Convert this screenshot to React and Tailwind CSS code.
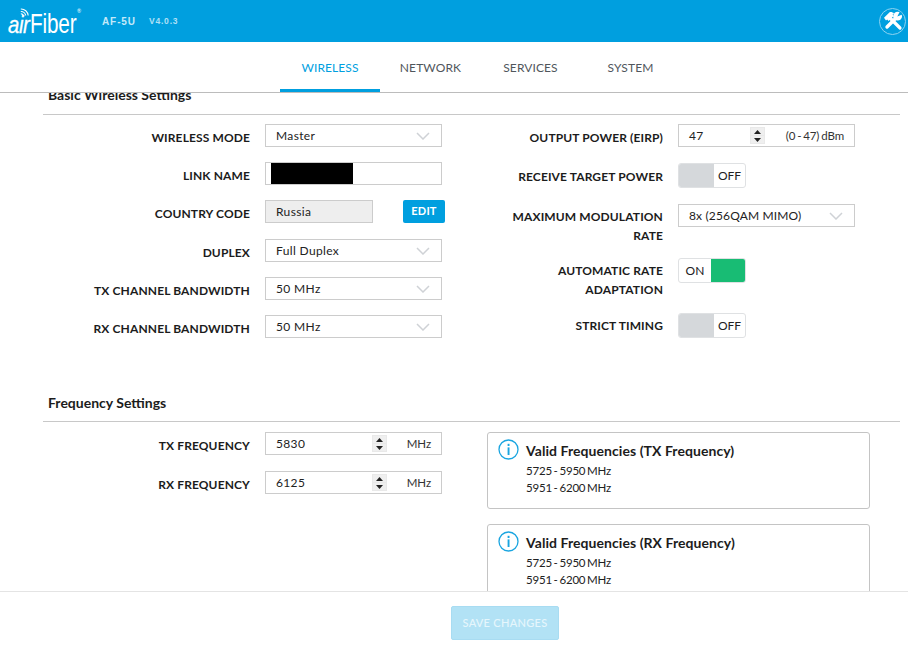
import React from "react";

function Chevron() {
  return (
    <svg width="14" height="8" viewBox="0 0 14 8" className="shrink-0">
      <path d="M1 1l6 6 6-6" fill="none" stroke="#cfd2d6" strokeWidth="1.5" />
    </svg>
  );
}

function Select({ value, tight }) {
  return (
    <div className={`w-[177px] h-[23px] border border-[#cccccc] bg-white flex items-center justify-between pl-[10px] pr-[11px] text-[12px] text-[#222] ${tight ? "tracking-[0.15px]" : "tracking-[0.35px]"}`}>
      <span>{value}</span>
      <Chevron />
    </div>
  );
}

function Spinner() {
  return (
    <div className="w-[15px] h-[17px] bg-[#e9e9e9] flex flex-col items-center justify-between py-[1px]">
      <div className="w-[13px] h-[7px] bg-[#efefef] flex items-center justify-center">
        <svg width="7" height="4" viewBox="0 0 7 4"><path d="M3.5 0L7 4H0z" fill="#222" /></svg>
      </div>
      <div className="w-[13px] h-[7px] bg-[#efefef] flex items-center justify-center">
        <svg width="7" height="4" viewBox="0 0 7 4"><path d="M3.5 4L7 0H0z" fill="#222" /></svg>
      </div>
    </div>
  );
}

function NumberInput({ value, unit, spinnerGap }) {
  return (
    <div className="w-[177px] h-[23px] border border-[#cccccc] bg-white flex items-center pl-[10px] pr-[10px] text-[12px] tracking-[0.35px] text-[#222]">
      <span className={spinnerGap}>{value}</span>
      <Spinner />
      <span className="ml-auto whitespace-nowrap text-[#333] text-[11.5px] tracking-[-0.1px] [word-spacing:-1px]">{unit}</span>
    </div>
  );
}

function Label({ children, className = "" }) {
  return (
    <div className={`text-right font-bold text-[12px] leading-[19px] tracking-[0.12px] text-[#1c1c1c] uppercase ${className}`}>
      {children}
    </div>
  );
}

function LeftRow({ label, children, className = "" }) {
  return (
    <div className={`flex items-center h-[23px] ${className}`}>
      <Label className="w-[207px] mr-[15px] pt-[3px]">{label}</Label>
      {children}
    </div>
  );
}

function Toggle({ on }) {
  return (
    <div className="w-[68px] h-[25px] rounded-[3px] border border-[#dfe1e3] flex overflow-hidden text-[12px] text-[#222] bg-white">
      {on ? (
        <>
          <div className="w-[32px] flex items-center justify-center">ON</div>
          <div className="flex-1 bg-[#18bc74]" />
        </>
      ) : (
        <>
          <div className="w-[35px] bg-[#d5d8db]" />
          <div className="flex-1 flex items-center justify-center">OFF</div>
        </>
      )}
    </div>
  );
}

function RightRow({ label, children, className = "", align = "items-center", labelPad = "" }) {
  return (
    <div className={`flex ${align} ${className}`}>
      <div className="w-[196px] mr-[15px] flex justify-end">
        <Label className={`w-[170px] ${labelPad}`}>{label}</Label>
      </div>
      {children}
    </div>
  );
}

function InfoBox({ title }) {
  return (
    <div className="w-[383px] h-[77px] shrink-0 border border-[#c4c4c4] rounded-[3px] bg-white pl-[10px] pt-[6px] flex">
      <svg width="21" height="21" viewBox="0 0 21 21" className="shrink-0 mr-[7px]">
        <circle cx="10.5" cy="10.5" r="9.5" fill="none" stroke="#1aa5e0" strokeWidth="1.3" />
        <rect x="9.6" y="4.8" width="1.9" height="2.2" fill="#1aa5e0" />
        <rect x="9.6" y="8.4" width="1.9" height="7.6" fill="#1aa5e0" />
      </svg>
      <div>
        <div className="font-bold text-[14px] leading-[23px] tracking-[0.06px] text-[#1c1c1c]">{title}</div>
        <div className="text-[11.5px] leading-[17px] tracking-[-0.2px] [word-spacing:-1px] text-[#222]">5725 - 5950 MHz</div>
        <div className="text-[11.5px] leading-[17px] tracking-[-0.2px] [word-spacing:-1px] text-[#222]">5951 - 6200 MHz</div>
      </div>
    </div>
  );
}

function ToolsIcon() {
  return (
    <div className="w-[27px] h-[27px] rounded-full border border-[#8ed3f1] flex items-center justify-center">
      <svg width="20" height="20" viewBox="0 0 20 20">
        <path d="M6.5 6.5L17 17" stroke="#fff" strokeWidth="3.2" strokeLinecap="round" />
        <path d="M1 6.8L6.6 1.2C8.4.9 10 1.4 11 2.6L9.6 3.6 10.6 5 5.6 10 4.2 8.6 3 9.6z" fill="#fff" />
        <path d="M14 6L4 16" stroke="#fff" strokeWidth="3.4" strokeLinecap="round" />
        <circle cx="14.6" cy="5.2" r="4.4" fill="#fff" />
        <path d="M14.3 5.4L17 .2 20 3.2z" fill="#009fdf" />
      </svg>
    </div>
  );
}

function Logo() {
  return (
    <div className="relative w-[72px] h-[24px] text-white whitespace-nowrap">
      <svg width="9" height="9" viewBox="0 0 11 11" className="absolute left-[12px] top-[-2px]">
        <g fill="none" stroke="#fff" strokeWidth="1.3">
          <path d="M1 1.2c4.6-.2 8.6 3.3 9 8" />
          <path d="M1 4.2c3-.1 5.6 2.2 6 5" />
          <path d="M1 7c1.4 0 2.7 1 3 2.4" />
        </g>
      </svg>
      <span className="absolute left-0 bottom-[-3px] italic text-[24px] leading-[24px] origin-bottom-left scale-x-[0.85] tracking-[-0.5px] font-['Liberation_Sans'] [-webkit-text-stroke:0.3px_white]">air</span>
      <span className="absolute left-[22px] bottom-[-4px] text-[28px] leading-[28px] origin-bottom-left scale-x-[0.74] tracking-[-0.2px] font-['Liberation_Sans']">Fiber</span>
      <span className="absolute left-[69px] top-[-1px] text-[5px] leading-[5px]">®</span>
    </div>
  );
}

function Tab({ children, active, className = "" }) {
  return (
    <div className={`h-[50px] flex items-center justify-center border-b-[3px] text-[12px] tracking-[0.1px] pt-[5px] ${active ? "border-[#009fdf] text-[#009fdf]" : "border-transparent text-[#50565c]"} ${className}`}>
      {children}
    </div>
  );
}

export default function App() {
  return (
    <div className="w-[908px] h-[646px] flex flex-col overflow-hidden bg-white font-['Lato','Liberation_Sans',sans-serif]">
      <header className="h-[42px] shrink-0 bg-[#009fdf] flex items-center pl-[8px] pr-[2px]">
        <div className="mt-[1px]"><Logo /></div>
        <div className="ml-[22px] text-[10px] font-bold tracking-[0.9px] text-[#c4e9f9] font-['Liberation_Sans']">AF-5U</div>
        <div className="ml-[13px] text-[8.5px] font-bold tracking-[0.8px] text-[#b0e0f6] font-['Liberation_Sans']">V4.0.3</div>
        <div className="ml-auto"><ToolsIcon /></div>
      </header>

      <nav className="h-[51px] shrink-0 border-b border-[#bcbcbc] flex items-start pl-[280px] bg-white">
        <Tab active className="w-[100px]">WIRELESS</Tab>
        <Tab className="w-[101px]">NETWORK</Tab>
        <Tab className="w-[99px]">SERVICES</Tab>
        <Tab className="w-[101px]">SYSTEM</Tab>
      </nav>

      <main className="flex-1 min-h-0 overflow-hidden pl-[43px] pr-[8px]">
        <section className="-mt-[8px]">
          <h2 className="font-bold text-[14px] leading-[20px] text-[#1c1c1c] pl-[5px] pb-[9px] border-b border-[#c8c8c8]">Basic Wireless Settings</h2>
          <div className="flex pt-[9px]">
            <div className="w-[424px] flex flex-col gap-[15px]">
              <LeftRow label="Wireless Mode"><Select value="Master" /></LeftRow>
              <LeftRow label="Link Name">
                <div className="w-[177px] h-[23px] border border-[#cccccc] bg-white pl-[5px]">
                  <div className="w-[82px] h-full bg-black" />
                </div>
              </LeftRow>
              <LeftRow label="Country Code">
                <div className="w-[108px] h-[23px] border border-[#cccccc] bg-[#eeeeee] flex items-center pl-[10px] text-[12px] tracking-[0.35px] text-[#222]">Russia</div>
                <div className="ml-[30px] w-[42px] h-[23px] rounded-[2px] bg-[#009fdf] text-white text-[11px] font-bold tracking-[0.2px] flex items-center justify-center">EDIT</div>
              </LeftRow>
              <LeftRow label="Duplex" className="mt-[1px]"><Select value="Full Duplex" /></LeftRow>
              <LeftRow label="TX Channel Bandwidth"><Select value="50 MHz" /></LeftRow>
              <LeftRow label="RX Channel Bandwidth"><Select value="50 MHz" /></LeftRow>
            </div>
            <div className="flex flex-col">
              <RightRow label="Output Power (EIRP)" className="h-[23px]" labelPad="pt-[4px]">
                <NumberInput value="47" unit="(0 - 47) dBm" spinnerGap="w-[61px]" />
              </RightRow>
              <RightRow label="Receive Target Power" className="mt-[16px]" labelPad="pt-[2px]"><Toggle /></RightRow>
              <RightRow label={<>Maximum Modulation<br />Rate</>} className="mt-[16px] h-[38px]" align="items-start" labelPad="pt-[3px]">
                <Select value="8x (256QAM MIMO)" tight />
              </RightRow>
              <RightRow label={<>Automatic Rate<br />Adaptation</>} className="mt-[16px] h-[38px]" align="items-start" labelPad="pt-[3px]">
                <Toggle on />
              </RightRow>
              <RightRow label="Strict Timing" className="mt-[17px]"><Toggle /></RightRow>
            </div>
          </div>
        </section>

        <section className="mt-[55px]">
          <h2 className="font-bold text-[14px] leading-[20px] text-[#1c1c1c] pl-[5px] pb-[8px] border-b border-[#c8c8c8]">Frequency Settings</h2>
          <div className="flex pt-[10px]">
            <div className="w-[444px] flex flex-col gap-[16px]">
              <LeftRow label="TX Frequency"><NumberInput value="5830" unit="MHz" spinnerGap="w-[96px]" /></LeftRow>
              <LeftRow label="RX Frequency"><NumberInput value="6125" unit="MHz" spinnerGap="w-[96px]" /></LeftRow>
            </div>
            <div className="flex flex-col gap-[15px]">
              <InfoBox title="Valid Frequencies (TX Frequency)" />
              <InfoBox title="Valid Frequencies (RX Frequency)" />
            </div>
          </div>
        </section>
      </main>

      <footer className="h-[55px] shrink-0 border-t border-[#e4e4e4] bg-white flex justify-center pt-[14px] pl-[102px]">
        <div className="w-[108px] h-[34px] rounded-[2px] border border-[#a8dcf2] bg-[#b2e2f5] text-[#e6f6fc] text-[11px] tracking-[0.3px] flex items-center justify-center font-medium">SAVE CHANGES</div>
      </footer>
    </div>
  );
}
